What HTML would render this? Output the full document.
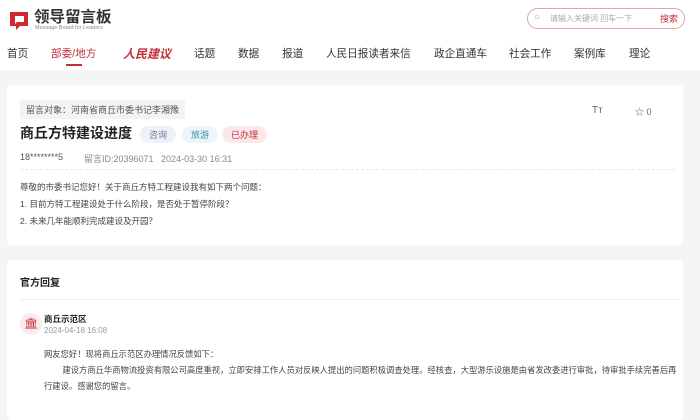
<!DOCTYPE html><html><head><meta charset="utf-8"><style>
*{margin:0;padding:0;box-sizing:border-box}
body{width:700px;height:408px;overflow:hidden;background:#f4f5f7;font-family:"Liberation Sans","Noto Sans CJK SC",sans-serif;color:#333;position:relative}
.hd{position:absolute;left:0;top:0;width:700px;height:70px;background:#fff}
.a{position:absolute;white-space:nowrap}
.nav{top:46px;font-size:10.6px;color:#333}
.card{position:absolute;left:7px;width:676px;background:#fff;border-radius:4px}
</style></head><body>
<div class="hd">
<svg class="a" style="left:8px;top:8px" width="22" height="22" viewBox="0 0 22 22"><path d="M2 4h18v14h-8l-4 4v-4H2z" fill="#d0282e"/><path d="M7 8h9v6H9l-2 2z" fill="#fff"/></svg>
<div class="a" style="left:34px;top:5px;font-size:15.5px;font-weight:bold;color:#333">领导留言板</div>
<div class="a" style="left:35px;top:25px;font-size:5.5px;color:#888">Message Board for Leaders</div>
<div class="a" style="left:527px;top:8px;width:158px;height:21px;border:1px solid #e3a5aa;border-radius:11px"></div>
<div class="a" style="left:534px;top:12px;font-size:10px;color:#aaa">○</div>
<div class="a" style="left:550px;top:13px;font-size:8px;color:#aaa">请输入关键词 回车一下</div>
<div class="a" style="left:660px;top:12px;font-size:9px;color:#c0303a">搜索</div>
<div class="a nav" style="left:7px">首页</div>
<div class="a nav" style="left:51px;color:#c0303a">部委/地方</div>
<div class="a" style="left:66px;top:64px;width:16px;height:2px;background:#c0303a"></div>
<div class="a nav" style="left:123px;color:#c0303a;font-style:italic;font-weight:bold;font-size:12px;top:45px">人民建议</div>
<div class="a nav" style="left:194px">话题</div>
<div class="a nav" style="left:238px">数据</div>
<div class="a nav" style="left:282px">报道</div>
<div class="a nav" style="left:326px">人民日报读者来信</div>
<div class="a nav" style="left:434px">政企直通车</div>
<div class="a nav" style="left:509px">社会工作</div>
<div class="a nav" style="left:574px">案例库</div>
<div class="a nav" style="left:629px">理论</div>
</div>
<div class="card" style="top:85px;height:160px">
<div class="a" style="left:13px;top:15px;background:#f3f3f3;padding:3px 6px;font-size:9px;color:#555">留言对象：河南省商丘市委书记李湘豫</div>
<div class="a" style="left:13px;top:38px;font-size:14px;font-weight:bold;color:#222">商丘方特建设进度</div>
<div class="a" style="left:133px;top:41px;background:#eef1f7;color:#6a7ea8;font-size:9px;padding:2px 9px;border-radius:9px">咨询</div>
<div class="a" style="left:175px;top:41px;background:#ebf6f8;color:#3a8ea8;font-size:9px;padding:2px 9px;border-radius:9px">旅游</div>
<div class="a" style="left:215px;top:41px;background:#fbe8ea;color:#c0303a;font-size:9px;padding:2px 9px;border-radius:9px">已办理</div>
<div class="a" style="left:13px;top:67px;font-size:9px;color:#555">18********5</div>
<div class="a" style="left:77px;top:67px;font-size:9px;color:#888">留言ID:20396071&nbsp;&nbsp;&nbsp;2024-03-30 16:31</div>
<div class="a" style="left:13px;top:84px;width:655px;border-top:1px dashed #e8e8e8"></div>
<div class="a" style="left:585px;top:20px;font-size:10px;color:#666">Tт</div>
<div class="a" style="left:628px;top:20px;font-size:9px;color:#666">☆ 0</div>
<div class="a" style="left:13px;top:94px;font-size:8.5px;color:#444;line-height:17px">尊敬的市委书记您好！关于商丘方特工程建设我有如下两个问题：<br>1. 目前方特工程建设处于什么阶段，是否处于暂停阶段？<br>2. 未来几年能顺利完成建设及开园？</div>
</div>
<div class="card" style="top:260px;height:160px">
<div class="a" style="left:13px;top:14px;font-size:10px;font-weight:bold;color:#222">官方回复</div>
<div class="a" style="left:13px;top:39px;width:660px;border-top:1px solid #eee"></div>
<div class="a" style="left:13px;top:53px;width:22px;height:22px;border-radius:50%;background:#fbeaea;color:#c0303a;font-size:11px;text-align:center;line-height:22px">🏛</div>
<div class="a" style="left:37px;top:53px;font-size:8.5px;font-weight:bold;color:#222">商丘示范区</div>
<div class="a" style="left:37px;top:66px;font-size:8px;color:#999">2024-04-18 16:08</div>
<div class="a" style="left:37px;top:86px;font-size:8.3px;color:#444;line-height:16px;width:640px;white-space:normal">网友您好！现将商丘示范区办理情况反馈如下：<br>&nbsp;&nbsp;&nbsp;&nbsp;&nbsp;&nbsp;&nbsp;&nbsp;建设方商丘华商物流投资有限公司高度重视，立即安排工作人员对反映人提出的问题积极调查处理。经核查，大型游乐设施是由省发改委进行审批，待审批手续完善后再行建设。感谢您的留言。</div>
</div>
</body></html>
